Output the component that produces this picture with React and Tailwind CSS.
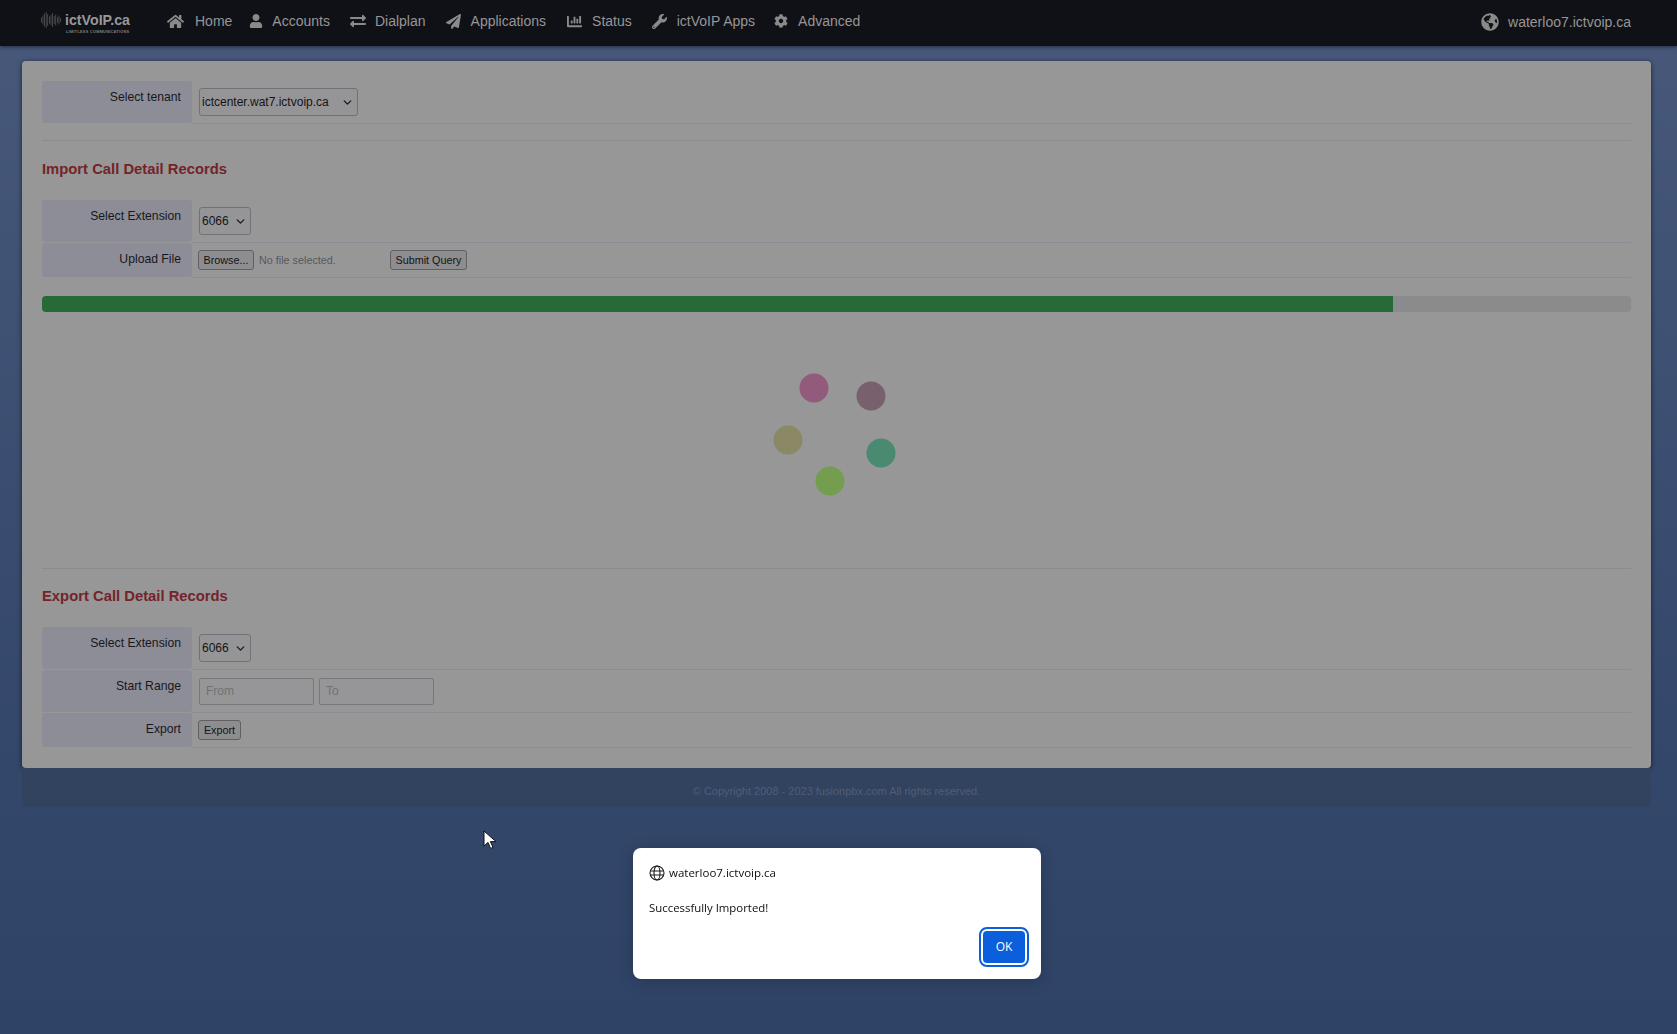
import { ChevronDown } from "lucide-react";
import { FaHome, FaUser, FaExchangeAlt, FaPaperPlane, FaChartBar, FaWrench, FaCog, FaGlobeAmericas } from "react-icons/fa";

const navItems = [
  { label: "Home", icon: FaHome, size: 17, gap: "gap-[11px]", next: "mr-[17px]" },
  { label: "Accounts", icon: FaUser, size: 14, gap: "gap-[9px]", next: "mr-[20px]" },
  { label: "Dialplan", icon: FaExchangeAlt, size: 16, gap: "gap-[9px]", next: "mr-[20px]" },
  { label: "Applications", icon: FaPaperPlane, size: 15, gap: "gap-[10px]", next: "mr-[21px]" },
  { label: "Status", icon: FaChartBar, size: 15, gap: "gap-[10px]", next: "mr-[20px]" },
  { label: "ictVoIP Apps", icon: FaWrench, size: 15, gap: "gap-[10px]", next: "mr-[19px]" },
  { label: "Advanced", icon: FaCog, size: 14, gap: "gap-[10px]", next: "" },
];

const waveBars = [5, 9, 13, 16, 12, 7, 10, 14, 8, 11, 6, 9, 4];

function Logo() {
  return (
    <div className="flex w-[89px] shrink-0 flex-col">
      <div className="flex items-center gap-[3px]">
        <svg width="21" height="18" viewBox="0 0 21 18" className="shrink-0">
          {waveBars.map((h, i) => (
            <rect key={i} x={i * 1.6} y={9 - h / 2} width="0.7" height={h} fill="#5c5d60" />
          ))}
        </svg>
        <span className="text-[14.2px] leading-[18px] font-bold whitespace-nowrap text-[#989898]">ictVoIP.ca</span>
      </div>
      <span className="mt-px ml-[25px] text-[3.8px] leading-[5px] font-bold tracking-[0.3px] whitespace-nowrap text-[#808080]">
        LIMITLESS COMMUNICATIONS
      </span>
    </div>
  );
}

function Navbar() {
  return (
    <nav className="flex h-[46px] items-center bg-[#101116] pr-[46px] pl-[41px] text-[14px] text-[#969696] shadow-[0_1px_4px_rgba(0,0,0,0.5)]">
      <Logo />
      <div className="ml-[37px] flex items-center pb-[4px]">
        {navItems.map((item) => (
          <div key={item.label} className={`flex items-center ${item.gap} ${item.next}`}>
            <item.icon size={item.size} className="text-[#8a8a8a]" />
            <span>{item.label}</span>
          </div>
        ))}
      </div>
      <div className="ml-auto flex items-center gap-[9px] pb-[2px]">
        <FaGlobeAmericas size={18} className="text-[#8a8a8a]" />
        <span>waterloo7.ictvoip.ca</span>
      </div>
    </nav>
  );
}

function Row({ label, tall, children }) {
  return (
    <div className={`flex ${tall ? "h-[43px]" : "h-[35px]"}`}>
      <div className="mb-px w-[150px] shrink-0 rounded-[3px] bg-[#8d8d97] pt-[7px] pr-[11px] text-right text-[12.2px] leading-[18px] text-[#17171c]">
        {label}
      </div>
      <div className="flex flex-1 items-center border-b border-[#8c8c94] pl-[7px]">{children}</div>
    </div>
  );
}

function FakeSelect({ children, className }) {
  return (
    <div className={`flex h-[28px] items-center justify-between rounded-[3px] border border-[#717178] bg-[#959597] pr-[3px] pl-[2px] text-[12px] text-[#141416] ${className}`}>
      <span>{children}</span>
      <ChevronDown size={13} strokeWidth={2.6} className="text-[#1d1d20]" />
    </div>
  );
}

function SmallButton({ children, className }) {
  return (
    <div className={`flex h-[20px] items-center justify-center rounded-[3px] border border-[#5f5f64] bg-[#8d8d90] text-[10.8px] text-[#131315] ${className}`}>
      {children}
    </div>
  );
}

function FakeInput({ children }) {
  return (
    <div className="flex h-[27px] w-[115px] items-center rounded-[2px] border border-[#77777d] bg-[#969698] pl-[6px] text-[12px] text-[#717174]">
      {children}
    </div>
  );
}

function Heading({ children }) {
  return <h2 className="text-[14.8px] leading-[18px] font-bold text-[#742428]">{children}</h2>;
}

function Spinner() {
  return (
    <div className="relative mt-[22px] h-[235px] w-full border-b border-[#8c8c90]">
      <svg width="130" height="124" viewBox="0 0 130 124" className="absolute top-[38px] left-[728px]">
        <circle cx="44" cy="16" r="14.5" fill="#925a7b" />
        <circle cx="101" cy="24" r="14.5" fill="#79606d" />
        <circle cx="18" cy="68" r="14.5" fill="#8a8865" />
        <circle cx="111" cy="81" r="14.5" fill="#4a8a70" />
        <circle cx="60" cy="109" r="14.5" fill="#739e50" />
      </svg>
    </div>
  );
}

function Dialog() {
  return (
    <div className="fixed top-[848px] left-[633px] h-[131px] w-[408px] rounded-[8px] bg-white font-['Open_Sans',sans-serif] text-[#0d0d0d] shadow-[0_2px_16px_rgba(0,0,0,0.2)]">
      <div className="flex items-center gap-[4px] pt-[16px] pl-[16px]">
        <svg width="16" height="16" viewBox="0 0 16 16" fill="none" stroke="#1c1c1c" strokeWidth="1.1">
          <circle cx="8" cy="8" r="7" />
          <ellipse cx="8" cy="8" rx="3" ry="7" />
          <path d="M1.2 6h13.6M1.2 10h13.6" />
        </svg>
        <span className="text-[11.5px] leading-[18px]">waterloo7.ictvoip.ca</span>
      </div>
      <p className="mt-[17px] pl-[16px] text-[11.4px] leading-[18px]">Successfully Imported!</p>
      <div className="absolute right-[12px] bottom-[12px] rounded-[8px] border-2 border-[#0b5fdc] p-[2px]">
        <div className="flex h-[32px] w-[42px] items-center justify-center rounded-[4px] bg-[#0b5fdc] text-[12px] text-white">OK</div>
      </div>
    </div>
  );
}

function Cursor() {
  return (
    <svg width="14" height="20" viewBox="0 0 14 20" className="fixed top-[830px] left-[483px]">
      <path d="M1 1v15l4-3.6 2.6 6 2.4-1-2.6-5.8H13z" fill="#fff" stroke="#111" strokeWidth="1" />
    </svg>
  );
}

export default function App() {
  return (
    <div className="relative h-[1034px] overflow-hidden bg-[linear-gradient(180deg,#48597a_0%,#34486c_70%,#2f4366_100%)] font-['Liberation_Sans',Arial,sans-serif]">
      <Navbar />
      <main className="mt-[15px] mr-[26px] ml-[22px]">
        <div className="rounded-[4px] bg-[#979798] px-[20px] pt-[20px] pb-[20px] shadow-[0_1px_5px_rgba(0,0,0,0.6)]">
          <Row label="Select tenant" tall>
            <FakeSelect className="w-[159px]">ictcenter.wat7.ictvoip.ca</FakeSelect>
          </Row>
          <div className="mt-[16px] border-t border-[#8c8c90] pt-[19px]">
            <Heading>Import Call Detail Records</Heading>
          </div>
          <div className="mt-[22px] flex flex-col">
            <Row label="Select Extension" tall>
              <FakeSelect className="w-[52px]">6066</FakeSelect>
            </Row>
            <Row label="Upload File">
              <SmallButton className="-ml-px w-[56px]">Browse...</SmallButton>
              <span className="ml-[5px] w-[131px] text-[10.8px] text-[#57575b]">No file selected.</span>
              <SmallButton className="w-[77px]">Submit Query</SmallButton>
            </Row>
          </div>
          <div className="mt-[18px] h-[16px] overflow-hidden rounded-[4px] bg-[#8b8b8e]">
            <div className="h-full w-[85%] bg-[#266b37]" />
          </div>
          <Spinner />
          <div className="pt-[18px]">
            <Heading>Export Call Detail Records</Heading>
          </div>
          <div className="mt-[22px] flex flex-col">
            <Row label="Select Extension" tall>
              <FakeSelect className="w-[52px]">6066</FakeSelect>
            </Row>
            <Row label="Start Range" tall>
              <div className="flex gap-[5px]">
                <FakeInput>From</FakeInput>
                <FakeInput>To</FakeInput>
              </div>
            </Row>
            <Row label="Export">
              <SmallButton className="-ml-px w-[43px]">Export</SmallButton>
            </Row>
          </div>
        </div>
        <footer className="flex h-[39px] items-center justify-center rounded-b-[4px] bg-[#31435f] pt-[8px] text-[11px] text-[#4f5e78]">
          © Copyright 2008 - 2023 fusionpbx.com All rights reserved.
        </footer>
      </main>
      <Cursor />
      <Dialog />
    </div>
  );
}
